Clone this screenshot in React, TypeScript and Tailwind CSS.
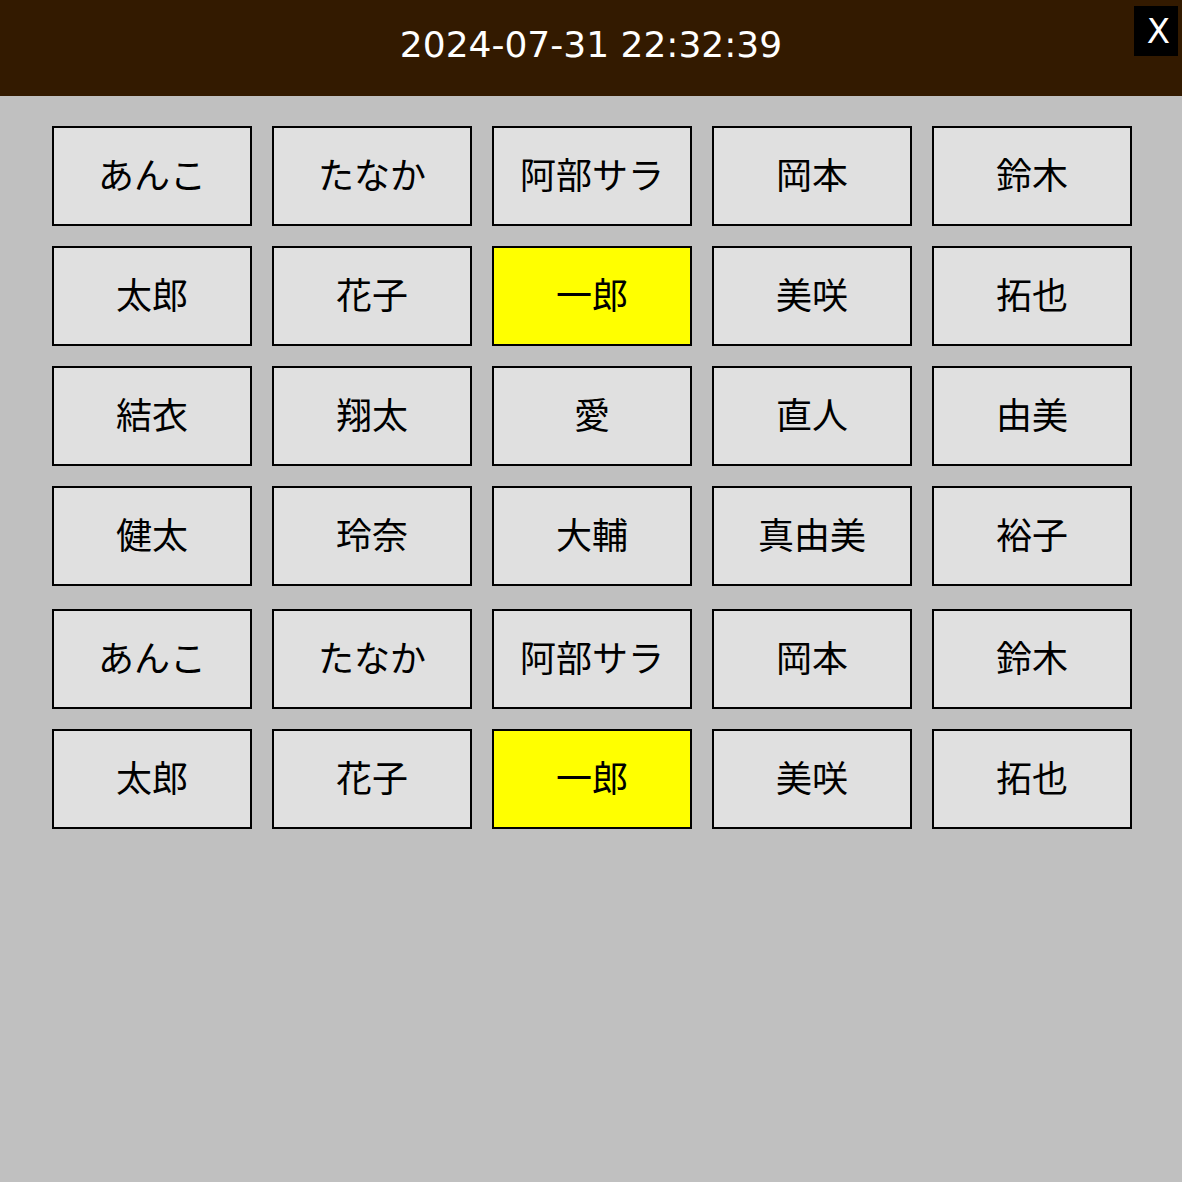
const names = [
  'あんこ', 'たなか', '阿部サラ', '岡本', '鈴木',
  '太郎', '花子', '一郎', '美咲', '拓也',
  '結衣', '翔太', '愛', '直人', '由美',
  '健太', '玲奈', '大輔', '真由美', '裕子',
];

const more = [
  'あんこ', 'たなか', '阿部サラ', '岡本', '鈴木',
  '太郎', '花子', '一郎', '美咲', '拓也',
];

const selected = '一郎';

function NameButton({ name }: { name: string }) {
  const active = name === selected;
  return (
    <button
      className={
        'w-[200px] h-[100px] border-2 border-black flex items-center justify-center text-[36px] leading-none text-black pb-[6px] ' +
        (active ? 'bg-[#ffff00]' : 'bg-[#e0e0e0]')
      }
    >
      {name}
    </button>
  );
}

export default function App() {
  return (
    <div
      className="w-[1182px] h-[1182px] bg-[#c0c0c0] flex flex-col"
      style={{ fontFamily: '"Noto Sans CJK JP", "Noto Sans", sans-serif' }}
    >
      <header className="relative h-[96px] bg-[#331a00] flex items-center justify-center shrink-0">
        <h1 className="text-white text-[36px] leading-none pb-[6px] font-['DejaVu_Sans',sans-serif]">
          2024-07-31 22:32:39
        </h1>
        <button className="absolute top-[6px] right-[4px] w-[44px] h-[50px] bg-black text-white text-[34px] leading-none flex items-center justify-center pl-[5px] font-['DejaVu_Sans',sans-serif]">
          X
        </button>
      </header>

      <main className="pt-[30px] pl-[52px] flex flex-col">
        <div className="grid grid-cols-[repeat(5,200px)] gap-5">
          {names.map((n, i) => (
            <NameButton key={i} name={n} />
          ))}
        </div>
        <div className="grid grid-cols-[repeat(5,200px)] gap-5 mt-[23px]">
          {more.map((n, i) => (
            <NameButton key={i} name={n} />
          ))}
        </div>
      </main>
    </div>
  );
}
